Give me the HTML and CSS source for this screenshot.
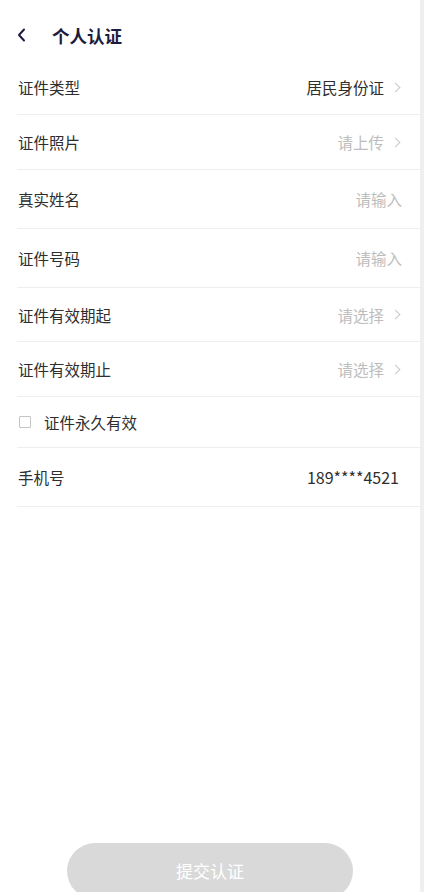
FILE: index.html
```html
<!DOCTYPE html>
<html>
<head>
<meta name="viewport" content="width=device-width, initial-scale=1">
<link rel="stylesheet" href="styles.css">
</head>
<body>

<div class="page">
  <div class="header">
    <span class="back">
      <svg width="9" height="14" viewBox="0 0 9 14"><path d="M7 1.5L2 7l5 5.5" fill="none" stroke="#1d1c40" stroke-width="2" stroke-linecap="round" stroke-linejoin="round"/></svg>
    </span>
    <span class="title">个人认证</span>
  </div>

  <div class="form">
    <div class="row h55">
      <span class="label">证件类型</span>
      <span class="value">居民身份证<i class="arrow"></i></span>
    </div>
    <div class="row h55">
      <span class="label">证件照片</span>
      <span class="value muted">请上传<i class="arrow"></i></span>
    </div>
    <div class="row h59">
      <span class="label">真实姓名</span>
      <span class="value muted">请输入</span>
    </div>
    <div class="row h59">
      <span class="label">证件号码</span>
      <span class="value muted">请输入</span>
    </div>
    <div class="row h54">
      <span class="label">证件有效期起</span>
      <span class="value muted">请选择<i class="arrow"></i></span>
    </div>
    <div class="row h55">
      <span class="label">证件有效期止</span>
      <span class="value muted">请选择<i class="arrow"></i></span>
    </div>
    <div class="row h51">
      <span class="label"><i class="check"></i>证件永久有效</span>
    </div>
    <div class="row h59">
      <span class="label">手机号</span>
      <span class="value phone">189****4521</span>
    </div>
  </div>

  <div class="footer">
    <button class="submit">提交认证</button>
  </div>
</div>
<div class="track"></div>

</body>
</html>
```

FILE: styles.css
```css
body {
  margin: 0;
  display: flex;
  height: 892px;
  overflow: hidden;
  background: #fff;
  font-family: "Noto Sans CJK SC", "Noto Sans", sans-serif;
  color: #333;
}

.page {
  flex: 1;
  display: flex;
  flex-direction: column;
}

.page > div {
  flex-shrink: 0;
}

.track {
  width: 4px;
  background-color: #efefef;
}

.header {
  display: flex;
  align-items: center;
  box-sizing: border-box;
  height: 60px;
  padding-top: 10px;
  padding-left: 17px;
}

.back {
  display: flex;
  width: 35px;
}

.title {
  font-size: 17.5px;
  font-weight: bold;
  color: #1d1c40;
}

.form {
  margin-left: 17px;
}

.row {
  display: flex;
  align-items: center;
  justify-content: space-between;
  box-sizing: border-box;
  border-bottom: 1px solid #eeeeee;
  padding: 0 18px 0 1px;
  font-size: 15.5px;
  color: #2e2e2e;
}

.h51 {height: 51px;}
.h54 {height: 54px;}
.h55 {height: 55px;}
.h59 {height: 59px;}

.label {
  display: flex;
  align-items: center;
}

.value {
  display: flex;
  align-items: center;
}

.muted {color: #bdbdbd;}

.phone {
  padding-right: 3px;
  font-size: 16px;
}

.arrow {
  display: inline-block;
  width: 6px;
  height: 6px;
  border-top: 1.3px solid #c8c8c8;
  border-right: 1.3px solid #c8c8c8;
  transform: rotate(45deg);
  margin-left: 8px;
  margin-right: 3px;
}

.check {
  display: inline-block;
  width: 10px;
  height: 10px;
  border: 1px solid #c4c4c4;
  border-radius: 1px;
  margin: 0 13px 0 1px;
}

.footer {
  padding-top: 336px;
  display: flex;
  justify-content: center;
}

.submit {
  width: 286px;
  height: 56px;
  border: none;
  border-radius: 28px;
  background-color: #d9d9d9;
  color: #fff;
  font-family: "Noto Sans CJK SC", sans-serif;
  font-size: 17px;
  padding-bottom: 2px;
}
```
